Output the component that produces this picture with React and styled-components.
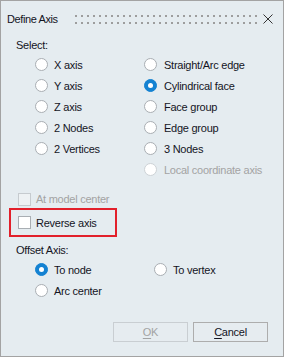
import React from 'react';
import styled, { createGlobalStyle } from 'styled-components';

const leftOptions = [
  { label: 'X axis' },
  { label: 'Y axis' },
  { label: 'Z axis' },
  { label: '2 Nodes' },
  { label: '2 Vertices' },
];

const rightOptions = [
  { label: 'Straight/Arc edge' },
  { label: 'Cylindrical face', checked: true },
  { label: 'Face group' },
  { label: 'Edge group' },
  { label: '3 Nodes' },
  { label: 'Local coordinate axis', disabled: true },
];

function Radio({ label, checked, disabled, gap = 6 }) {
  return (
    <Option $disabled={disabled}>
      <RadioDot $checked={checked} $disabled={disabled} />
      <Label $gap={gap}>{label}</Label>
    </Option>
  );
}

function Check({ label, disabled }) {
  return (
    <CheckRow $disabled={disabled}>
      <Box $disabled={disabled} />
      <Label $gap={5}>{label}</Label>
    </CheckRow>
  );
}

export default function App() {
  return (
    <>
      <Global />
      <Dialog>
        <TitleBar>
          <Title>Define Axis</Title>
          <Grip>
            <GripRow />
            <GripRow />
          </Grip>
          <Close>
            <svg width="10" height="10" viewBox="0 0 10 10">
              <path d="M0.5 0.5 L9.5 9.5 M9.5 0.5 L0.5 9.5" stroke="#333" strokeWidth="1" fill="none" />
            </svg>
          </Close>
        </TitleBar>

        <Body>
          <SectionLabel>Select:</SectionLabel>
          <Columns>
            <Column $width={109}>
              {leftOptions.map(o => <Radio key={o.label} {...o} />)}
            </Column>
            <Column>
              {rightOptions.map(o => <Radio key={o.label} gap={7} {...o} />)}
            </Column>
          </Columns>

          <CheckGroup>
            <Check label="At model center" disabled />
            <Highlight>
              <Check label="Reverse axis" />
            </Highlight>
          </CheckGroup>

          <SectionLabel $top={4}>Offset Axis:</SectionLabel>
          <OffsetGrid>
            <Radio label="To node" checked />
            <Radio label="To vertex" />
            <Radio label="Arc center" />
          </OffsetGrid>
        </Body>

        <Footer>
          <Button disabled>
            <u>O</u>K
          </Button>
          <Button>
            <u>C</u>ancel
          </Button>
        </Footer>
      </Dialog>
    </>
  );
}

const Global = createGlobalStyle`
  html, body {
    margin: 0;
    padding: 0;
    background: #ffffff;
  }
  * {
    box-sizing: border-box;
  }
`;

const Dialog = styled.div`
  width: 284px;
  height: 357px;
  border: 1px solid #a3a3a3;
  background: #e5ecf0;
  font-family: "Liberation Sans", Arial, sans-serif;
  font-size: 11px;
  letter-spacing: -0.25px;
  color: #14141e;
  display: flex;
  flex-direction: column;
`;

const TitleBar = styled.div`
  height: 35px;
  display: flex;
  align-items: center;
  padding-left: 6px;
`;

const Title = styled.div`
  font-size: 11px;
  letter-spacing: -0.4px;
  padding-top: 1px;
`;

const Grip = styled.div`
  flex: 1;
  margin: 2px 6px 0 17px;
  display: flex;
  flex-direction: column;
  gap: 5px;
`;

const GripRow = styled.div`
  height: 2px;
  background: repeating-linear-gradient(90deg, #9d9d9d 0 2px, transparent 2px 6px);
`;

const Close = styled.div`
  width: 10px;
  height: 10px;
  margin-right: 10px;
  display: flex;
`;

const Body = styled.div`
  padding-left: 15px;
  display: flex;
  flex-direction: column;
`;

const SectionLabel = styled.div`
  height: 18px;
  line-height: 18px;
  margin-top: ${p => p.$top || 0}px;
`;

const Columns = styled.div`
  display: flex;
  padding-left: 19px;
`;

const Column = styled.div`
  display: flex;
  flex-direction: column;
  width: ${p => (p.$width ? `${p.$width}px` : 'auto')};
`;

const Option = styled.div`
  height: 21px;
  display: flex;
  align-items: center;
  color: ${p => (p.$disabled ? '#a3a3a3' : 'inherit')};
`;

const RadioDot = styled.span`
  position: relative;
  width: 13px;
  height: 13px;
  flex: none;
  border-radius: 50%;
  border: 1px solid ${p => (p.$checked ? '#1482d2' : p.$disabled ? '#cdd2d6' : '#a9aeb3')};
  background: ${p => (p.$checked ? '#1482d2' : '#ffffff')};

  &::after {
    content: '';
    display: ${p => (p.$checked ? 'block' : 'none')};
    position: absolute;
    left: 3px;
    top: 3px;
    width: 5px;
    height: 5px;
    border-radius: 50%;
    background: #ffffff;
  }
`;

const Label = styled.span`
  margin-left: ${p => p.$gap}px;
  white-space: nowrap;
`;

const CheckGroup = styled.div`
  margin-top: 10px;
  display: flex;
  flex-direction: column;
`;

const CheckRow = styled.div`
  height: 18px;
  display: flex;
  align-items: center;
  padding-left: 2px;
  color: ${p => (p.$disabled ? '#a3a3a3' : 'inherit')};
`;

const Box = styled.span`
  width: 13px;
  height: 13px;
  flex: none;
  border: 1px solid ${p => (p.$disabled ? '#c6cbcf' : '#a9aeb3')};
  background: ${p => (p.$disabled ? '#eef2f4' : '#ffffff')};
`;

const Highlight = styled.div`
  width: 108px;
  height: 29px;
  margin-left: -7px;
  border: 2px solid #e2202b;
  padding: 3px 0 3px 5px;
  display: flex;
  align-items: center;
`;

const OffsetGrid = styled.div`
  display: grid;
  grid-template-columns: 119px auto;
  padding-left: 19px;
`;

const Footer = styled.div`
  margin-top: 21px;
  display: flex;
  justify-content: flex-end;
  gap: 5px;
  padding-right: 15px;
`;

const Button = styled.button`
  width: 75px;
  height: 20px;
  padding: 0;
  border: 1px solid ${p => (p.disabled ? '#c9ced2' : '#adadad')};
  background: #e6ecf0;
  font-family: "Liberation Sans", Arial, sans-serif;
  font-size: 11px;
  letter-spacing: -0.25px;
  color: ${p => (p.disabled ? '#a3a3a3' : '#14141e')};

  u {
    text-decoration-thickness: 1px;
    text-underline-offset: 2px;
  }
`;
